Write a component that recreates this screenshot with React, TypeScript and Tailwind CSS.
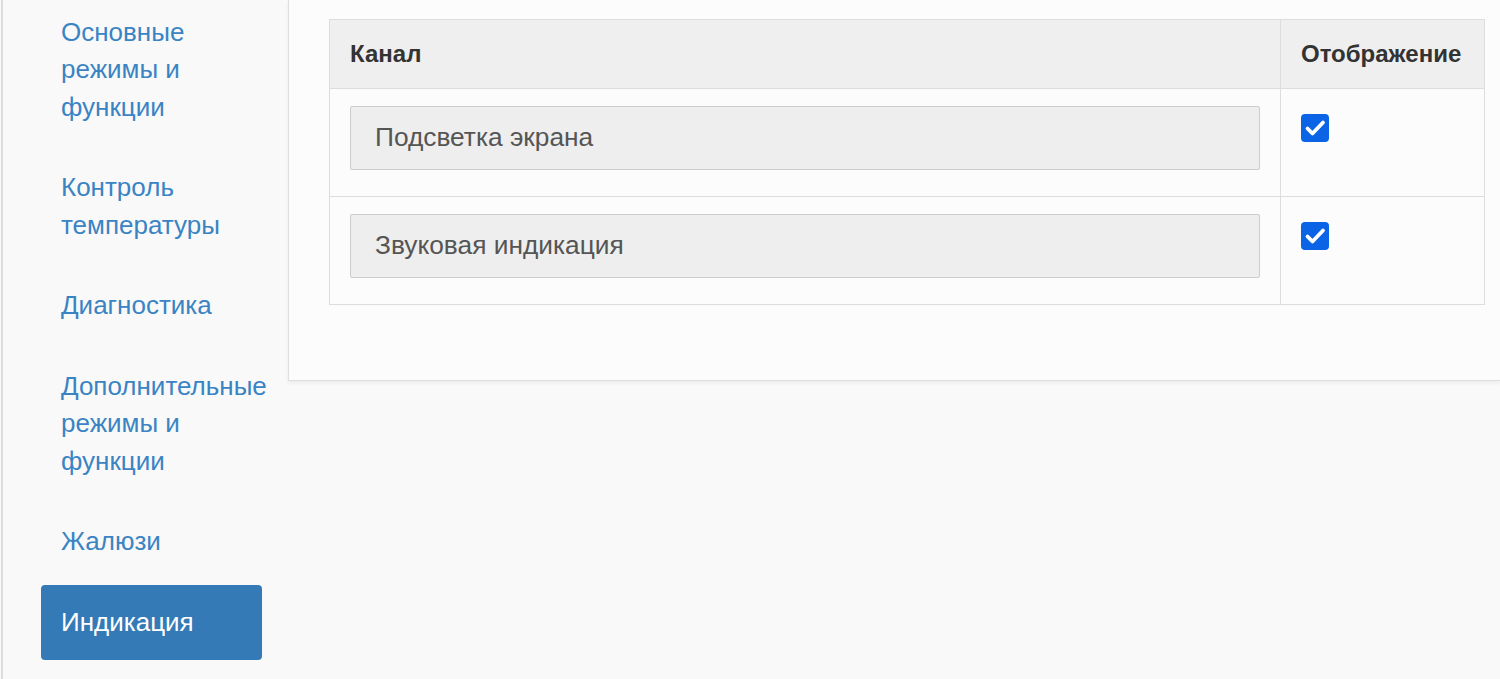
const navItems = [
  { label: "Основные режимы и функции", active: false },
  { label: "Контроль температуры", active: false },
  { label: "Диагностика", active: false },
  { label: "Дополнительные режимы и функции", active: false },
  { label: "Жалюзи", active: false },
  { label: "Индикация", active: true },
];

const channels = ["Подсветка экрана", "Звуковая индикация"];

function Checkbox() {
  return (
    <div className="w-[28px] h-[28px] rounded-[4px] bg-[#0b63e5]">
      <svg width="28" height="28" viewBox="0 0 28 28" fill="none">
        <path d="M6.5 14.5l5 5L22 8.5" stroke="white" strokeWidth="3.8" strokeLinecap="round" strokeLinejoin="round" />
      </svg>
    </div>
  );
}

export default function App() {
  return (
    <div
      className="h-[679px] overflow-hidden bg-[#f9f9f9] flex"
      style={{ fontFamily: '"Liberation Sans", Arial, sans-serif' }}
    >
      <div className="w-[287px] shrink-0 border-l-[2px] border-[#dcdcdc] ml-[1px] pl-[38px] pr-[26px]">
        <ul className="-mt-[5px] flex flex-col gap-[6px]">
          {navItems.map(item => (
            <li key={item.label}>
              <a
                className={
                  item.active
                    ? "block rounded-[4px] bg-[#337ab7] text-white px-[20px] py-[18.5px] text-[26px] leading-[37.5px]"
                    : "block rounded-[4px] text-[#3a84c4] px-[20px] py-[18.5px] text-[26px] leading-[37.5px]"
                }
              >
                {item.label}
              </a>
            </li>
          ))}
        </ul>
      </div>

      <div className="flex-1 min-w-0 self-start bg-[#fcfcfc] border-l border-b border-[#dedede] shadow-[0_2px_4px_rgba(0,0,0,0.06)] pl-[40px] pr-[15px] pt-[19px] pb-[75px]">
        <table className="w-full border-collapse border border-[#dddddd] text-[#333]">
          <thead>
            <tr className="bg-[#efefef]">
              <th className="text-left font-bold text-[24px] leading-[28px] px-[20px] py-[20px] border border-[#dddddd]">
                Канал
              </th>
              <th className="w-[204px] text-left font-bold text-[24px] leading-[28px] px-[20px] py-[20px] border border-[#dddddd]">
                Отображение
              </th>
            </tr>
          </thead>
          <tbody>
            {channels.map(ch => (
              <tr key={ch}>
                <td className="align-top px-[20px] pt-[17px] pb-[26px] border border-[#dddddd]">
                  <div className="h-[64px] border border-[#cccccc] bg-[#eeeeee] rounded-[2px] px-[24px] flex items-center text-[26.3px] text-[#555]">
                    {ch}
                  </div>
                </td>
                <td className="align-top px-[20px] pt-[25px] border border-[#dddddd]">
                  <Checkbox />
                </td>
              </tr>
            ))}
          </tbody>
        </table>
      </div>
    </div>
  );
}
